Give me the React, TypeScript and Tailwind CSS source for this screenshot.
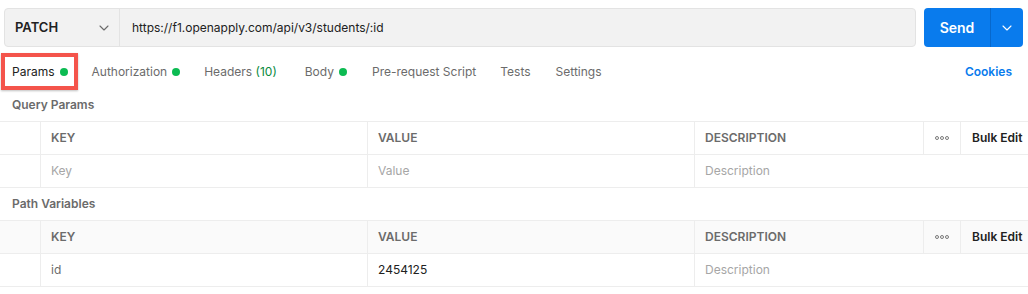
import React from "react";

const font = { fontFamily: "Inter, 'Noto Sans', sans-serif" };

function Chevron({ className }: { className?: string }) {
  return (
    <svg width="10" height="6" viewBox="0 0 10 6" className={className} fill="none">
      <path d="M1 1l4 4 4-4" stroke="currentColor" strokeWidth="1.1" strokeLinecap="round" strokeLinejoin="round" />
    </svg>
  );
}

function Dot() {
  return <span className="ml-[5px] inline-block h-[8px] w-[8px] rounded-full bg-[#0cbb52]" />;
}

function Table({ rows, shaded }: { rows: { key: string; value: string; keyPh: boolean; valPh: boolean }[]; shaded?: boolean }) {
  const line = "border-[#ededed]";
  return (
    <div className={`border-t ${line}`}>
      <div className={`grid grid-cols-[40px_327px_327px_229px_37px_1fr] h-[33px] border-b ${line} ${shaded ? "bg-[#fafafa]" : ""}`}>
        <div />
        <div className={`border-l ${line} flex items-center pl-[10px] text-[12px] font-semibold text-[#6b6b6b]`}>KEY</div>
        <div className={`border-l ${line} flex items-center pl-[10px] text-[12px] font-semibold text-[#6b6b6b]`}>VALUE</div>
        <div className={`border-l ${line} flex items-center pl-[10px] text-[12px] font-semibold text-[#6b6b6b]`}>DESCRIPTION</div>
        <div className={`border-l ${line} flex items-center justify-center`}>
          <svg width="14" height="4" viewBox="0 0 14 4" fill="none">
            <circle cx="2" cy="2" r="1.5" stroke="#6b6b6b" strokeWidth="0.9" />
            <circle cx="7" cy="2" r="1.5" stroke="#6b6b6b" strokeWidth="0.9" />
            <circle cx="12" cy="2" r="1.5" stroke="#6b6b6b" strokeWidth="0.9" />
          </svg>
        </div>
        <div className={`border-l ${line} flex items-center pl-[11px] text-[12px] font-semibold text-[#212121]`}>Bulk Edit</div>
      </div>
      {rows.map((r, i) => (
        <div key={i} className={`grid grid-cols-[40px_327px_327px_1fr] h-[33px] border-b ${line}`}>
          <div />
          <div className={`border-l ${line} flex items-center pl-[10px] text-[12px] ${r.keyPh ? "text-[#a6a6a6]" : "text-[#6b6b6b]"}`}>{r.key}</div>
          <div className={`border-l ${line} flex items-center pl-[10px] text-[12px] ${r.valPh ? "text-[#a6a6a6]" : "text-[#212121]"}`}>{r.value}</div>
          <div className={`border-l ${line} flex items-center pl-[10px] text-[12px] text-[#a6a6a6]`}>Description</div>
        </div>
      ))}
    </div>
  );
}

export default function App() {
  return (
    <div className="w-[1028px] h-[294px] bg-white overflow-hidden" style={font}>
      {/* URL bar */}
      <div className="flex pt-[8px] pl-[4px] pr-[5px] gap-[8px]">
        <div className="flex h-[39px] w-[912px] rounded-[4px] border border-[#e3e3e3] bg-[#f2f2f2]">
          <div className="flex w-[115px] items-center justify-between border-r border-[#e3e3e3] pl-[10px] pr-[10px]">
            <span className="text-[13px] font-semibold text-[#212121]">PATCH</span>
            <Chevron className="text-[#6b6b6b]" />
          </div>
          <div className="flex items-center pl-[12px] text-[12px] text-[#212121]">https://f1.openapply.com/api/v3/students/:id</div>
        </div>
        <div className="flex h-[39px] w-[99px] rounded-[4px] bg-[#097bed] text-white">
          <div className="flex w-[67px] items-center justify-center border-r border-[#0768cc] text-[14px] font-semibold">Send</div>
          <div className="flex flex-1 items-center justify-center">
            <Chevron className="text-white" />
          </div>
        </div>
      </div>

      {/* Tabs */}
      <div className="mt-[8px] flex h-[34px] items-center pl-[12px] pr-[16px] text-[12px] text-[#6b6b6b]">
        <div className="flex items-center">
          <div className="relative flex h-[34px] items-center text-[#212121]">
            Params
            <Dot />
            <div className="absolute bottom-[1px] left-0 right-0 h-[2px] bg-[#3a3a3a]" />
            <div className="absolute left-[-11px] right-[-10px] top-[-2px] bottom-[-1px] border-[4px] border-solid border-[#f4544b] shadow-[0_1px_2px_rgba(0,0,0,0.25)]" />
          </div>
          <div className="ml-[24px] flex items-center">Authorization<Dot /></div>
          <div className="ml-[24px] flex items-center">Headers&nbsp;<span className="text-[#0a8a3e]">(10)</span></div>
          <div className="ml-[28px] flex items-center">Body<Dot /></div>
          <div className="ml-[25px]">Pre-request Script</div>
          <div className="ml-[24px]">Tests</div>
          <div className="ml-[25px]">Settings</div>
        </div>
        <div className="ml-auto text-[12px] font-semibold text-[#097bed]">Cookies</div>
      </div>

      {/* Query Params */}
      <div className="flex h-[32px] items-center pl-[12px] text-[12px] font-semibold text-[#6b6b6b]">Query Params</div>
      <Table rows={[{ key: "Key", value: "Value", keyPh: true, valPh: true }]} />

      {/* Path Variables */}
      <div className="flex h-[32px] items-center pl-[12px] text-[12px] font-semibold text-[#6b6b6b]">Path Variables</div>
      <Table shaded rows={[{ key: "id", value: "2454125", keyPh: false, valPh: false }]} />
    </div>
  );
}
